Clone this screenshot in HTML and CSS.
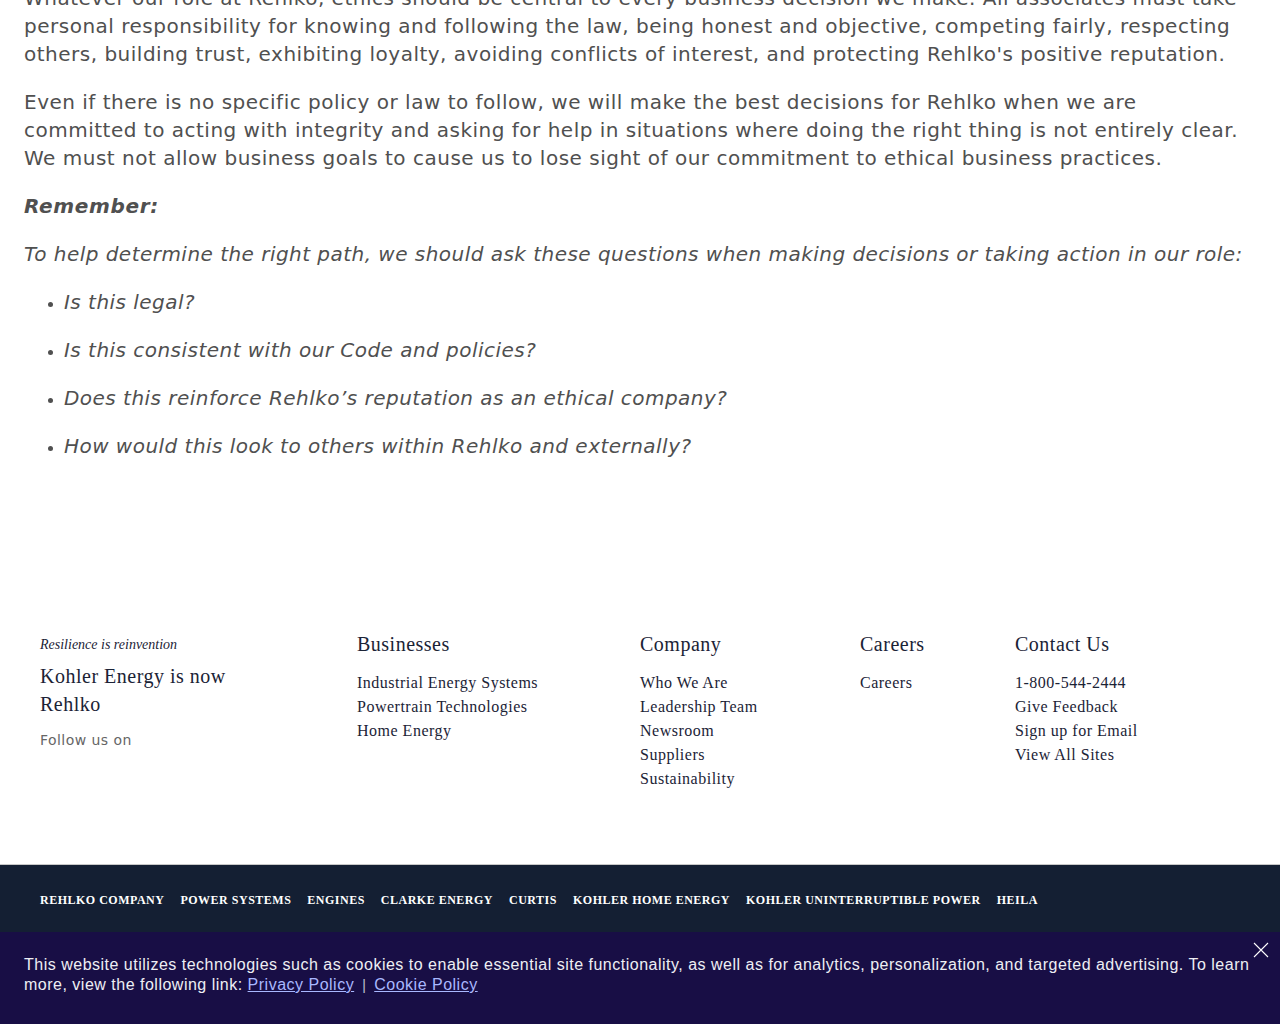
FILE: index.html
```html
<!DOCTYPE html>
<html lang="en">
<head>
<meta charset="utf-8">
<title>Code of Conduct - Rehlko</title>
<link rel="stylesheet" href="styles.css">
</head>
<body>
<main class="content">
  <p>Whatever our role at Rehlko, ethics should be central to every business decision we make. All associates must take personal responsibility for knowing and following the law, being honest and objective, competing fairly, respecting others, building trust, exhibiting loyalty, avoiding conflicts of interest, and protecting Rehlko's positive reputation.</p>
  <p>Even if there is no specific policy or law to follow, we will make the best decisions for Rehlko when we are committed to acting with integrity and asking for help in situations where doing the right thing is not entirely clear. We must not allow business goals to cause us to lose sight of our commitment to ethical business practices.</p>
  <p class="remember"><em><strong>Remember:</strong></em></p>
  <p><em>To help determine the right path, we should ask these questions when making decisions or taking action in our role:</em></p>
  <ul class="questions">
    <li><em>Is this legal?</em></li>
    <li><em>Is this consistent with our Code and policies?</em></li>
    <li><em>Does this reinforce Rehlko’s reputation as an ethical company?</em></li>
    <li><em>How would this look to others within Rehlko and externally?</em></li>
  </ul>
</main>

<footer class="site-footer">
  <div class="footer-main">
    <div class="brand-col">
      <p class="tagline">Resilience is reinvention</p>
      <p class="brand-title">Kohler Energy is now<br>Rehlko</p>
      <p class="follow">Follow us on</p>
    </div>
    <div class="link-col col-businesses">
      <h3>Businesses</h3>
      <a href="#">Industrial Energy Systems</a>
      <a href="#">Powertrain Technologies</a>
      <a href="#">Home Energy</a>
    </div>
    <div class="link-col col-company">
      <h3>Company</h3>
      <a href="#">Who We Are</a>
      <a href="#">Leadership Team</a>
      <a href="#">Newsroom</a>
      <a href="#">Suppliers</a>
      <a href="#">Sustainability</a>
    </div>
    <div class="link-col col-careers">
      <h3>Careers</h3>
      <a href="#">Careers</a>
    </div>
    <div class="link-col col-contact">
      <h3>Contact Us</h3>
      <a href="#">1-800-544-2444</a>
      <a href="#">Give Feedback</a>
      <a href="#">Sign up for Email</a>
      <a href="#">View All Sites</a>
    </div>
  </div>
  <nav class="brand-bar">
    <a href="#">Rehlko Company</a>
    <a href="#">Power Systems</a>
    <a href="#">Engines</a>
    <a href="#">Clarke Energy</a>
    <a href="#">Curtis</a>
    <a href="#">Kohler Home Energy</a>
    <a href="#">Kohler Uninterruptible Power</a>
    <a href="#">Heila</a>
  </nav>
</footer>

<div class="cookie-banner">
  <p class="cookie-text">This website utilizes technologies such as cookies to enable essential site functionality, as well as for analytics, personalization, and targeted advertising. To learn more, view the following link: <a href="#">Privacy Policy</a> <span class="sep">|</span> <a href="#">Cookie Policy</a></p>
  <button class="cookie-close" aria-label="Close">
    <svg width="16" height="16" viewBox="0 0 16 16"><path d="M1 1 L15 15 M15 1 L1 15" stroke="#ffffff" stroke-width="1.1" fill="none"/></svg>
  </button>
</div>
</body>
</html>
```

FILE: styles.css
```css
html, body {
  margin: 0;
  padding: 0;
  background: #ffffff;
}

body {
  font-family: "DejaVu Sans", sans-serif;
  color: #505050;
}

.content {
  margin-top: -16px;
  padding: 0 32px 140px 24px;
  font-size: 20px;
  line-height: 28px;
  letter-spacing: 0.5px;
}

.content p {
  margin: 0 0 20px;
}

.content em {
  letter-spacing: 0.47px;
}

.remember strong {
  font-weight: bold;
  letter-spacing: 0.65px;
}

.questions {
  margin: 0;
  padding-left: 40px;
}

.questions li {
  margin: 0 0 20px;
}

.questions li::marker {
  font-size: 15px;
}

.site-footer {
  font-family: "Liberation Serif", "Times New Roman", serif;
  color: #1b2336;
}

.footer-main {
  display: flex;
  padding: 14px 40px 73px;
}

.brand-col {
  width: 317px;
}

.tagline {
  margin: 1px 0 0;
  font-style: italic;
  font-size: 14px;
  line-height: 20px;
}

.brand-title {
  margin: 7px 0 0;
  font-size: 20px;
  line-height: 28px;
  letter-spacing: 0.5px;
}

.follow {
  margin: 12px 0 0;
  font-family: "DejaVu Sans", sans-serif;
  font-size: 14px;
  line-height: 20px;
  color: #666666;
  letter-spacing: 0.45px;
}

.link-col {
  display: flex;
  flex-direction: column;
}

.link-col h3 {
  margin: 0 0 17px;
  font-weight: normal;
  font-size: 20px;
  line-height: 20px;
  letter-spacing: 0.5px;
}

.link-col a {
  color: #1b2336;
  text-decoration: none;
  font-size: 16px;
  line-height: 24px;
  letter-spacing: 0.5px;
}

.col-businesses { width: 283px; }
.col-company { width: 220px; }
.col-careers { width: 155px; }

.brand-bar {
  border-top: 1px solid #c8c8c8;
  background: #141f33;
  height: 67px;
  display: flex;
  align-items: center;
  gap: 16px;
  padding: 0 40px;
}

.brand-bar a {
  color: #ffffff;
  text-decoration: none;
  text-transform: uppercase;
  font-weight: bold;
  font-size: 12px;
  letter-spacing: 0.5px;
  padding-top: 4px;
}

.cookie-banner {
  position: fixed;
  left: 0;
  right: 0;
  bottom: 0;
  height: 92px;
  background: #180e45;
  box-sizing: border-box;
  padding: 23px 24px 0;
}

.cookie-text {
  margin: 0;
  font-family: "Liberation Sans", Arial, sans-serif;
  font-size: 16px;
  line-height: 20px;
  color: #eeeef4;
  letter-spacing: 0.5px;
}

.cookie-text a {
  color: #a9b8ff;
  text-decoration: underline;
}

.cookie-text .sep {
  margin: 0 3px;
  color: #c0c0d0;
  font-size: 14px;
}

.cookie-close {
  position: absolute;
  top: 10px;
  right: 11px;
  width: 16px;
  height: 16px;
  padding: 0;
  border: 0;
  background: transparent;
  cursor: pointer;
}

.cookie-close svg {
  display: block;
}
```
